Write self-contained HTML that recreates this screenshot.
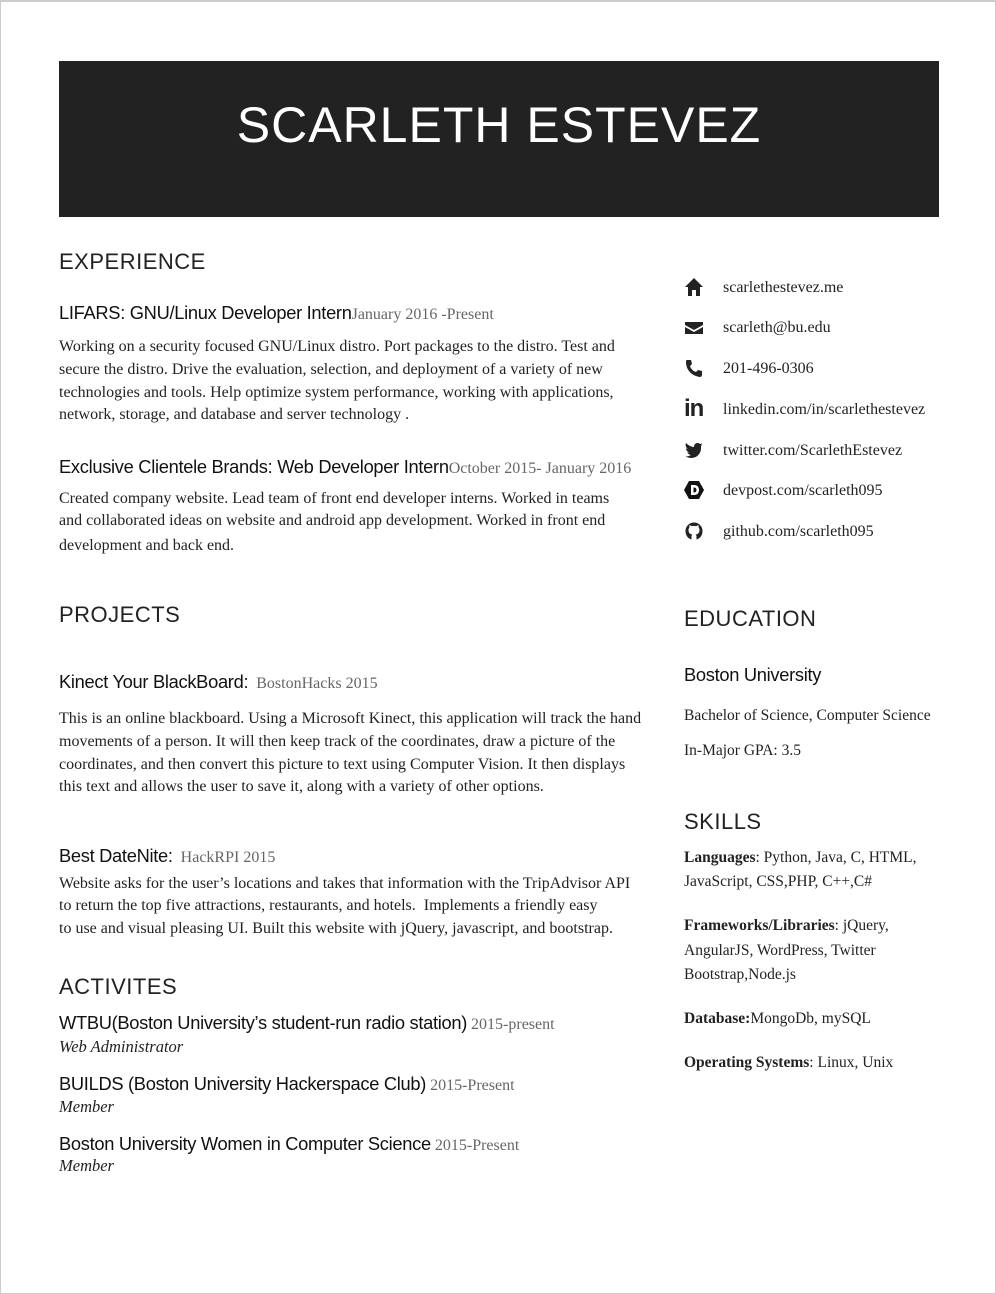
<!DOCTYPE html>
<html><head><meta charset="utf-8"><style>
*{margin:0;padding:0;box-sizing:border-box}
body{width:996px;height:1294px;background:#fff;position:relative;overflow:hidden;font-family:"Liberation Serif",serif;color:#222}
.frame{position:absolute;left:0;top:0;width:996px;height:1294px;border:1px solid #ccc;border-top:2px solid #ccc}
.hdr{position:absolute;left:59px;top:61px;width:880px;height:156px;background:#222;color:#fff;font-family:"Liberation Sans",sans-serif;font-size:50px;text-align:center;line-height:128px;letter-spacing:1px}
.a{position:absolute;white-space:nowrap}
.h{font-family:"Liberation Sans",sans-serif;font-size:22px;color:#222;letter-spacing:.5px}
.t{font-family:"Liberation Sans",sans-serif;font-size:18.3px;color:#111;letter-spacing:-.3px}
.d{font-family:"Liberation Serif",serif;font-size:16px;color:#666}
.p{font-family:"Liberation Serif",serif;font-size:16px;color:#222}
.r{font-size:15.5px}
.i{font-style:italic;font-size:16.5px}
.ic{position:absolute;left:684px;width:20px;height:20px}
</style></head><body>
<div class="frame"></div>
<div class="hdr">SCARLETH ESTEVEZ</div>

<div class="a h" style="left:59px;top:249px">EXPERIENCE</div>
<div class="a" style="left:59px;top:302px"><span class="t">LIFARS: GNU/Linux Developer Intern</span><span class="d">January 2016 -Present</span></div>
<div class="a p" style="left:59px;top:338px">Working on a security focused GNU/Linux distro. Port packages to the distro. Test and</div>
<div class="a p" style="left:59px;top:361px">secure the distro. Drive the evaluation, selection, and deployment of a variety of new</div>
<div class="a p" style="left:59px;top:384px">technologies and tools. Help optimize system performance, working with applications,</div>
<div class="a p" style="left:59px;top:406px">network, storage, and database and server technology .</div>

<div class="a" style="left:59px;top:456px"><span class="t">Exclusive Clientele Brands: Web Developer Intern</span><span class="d">October 2015- January 2016</span></div>
<div class="a p" style="left:59px;top:490px">Created company website. Lead team of front end developer interns. Worked in teams</div>
<div class="a p" style="left:59px;top:512px">and collaborated ideas on website and android app development. Worked in front end</div>
<div class="a p" style="left:59px;top:537px">development and back end.</div>

<div class="a h" style="left:59px;top:602px">PROJECTS</div>
<div class="a" style="left:59px;top:671px"><span class="t">Kinect Your BlackBoard:</span>&nbsp;&nbsp;<span class="d">BostonHacks 2015</span></div>
<div class="a p" style="left:59px;top:710px">This is an online blackboard. Using a Microsoft Kinect, this application will track the hand</div>
<div class="a p" style="left:59px;top:733px">movements of a person. It will then keep track of the coordinates, draw a picture of the</div>
<div class="a p" style="left:59px;top:756px">coordinates, and then convert this picture to text using Computer Vision. It then displays</div>
<div class="a p" style="left:59px;top:778px">this text and allows the user to save it, along with a variety of other options.</div>

<div class="a" style="left:59px;top:845px"><span class="t">Best DateNite:</span>&nbsp;&nbsp;<span class="d">HackRPI 2015</span></div>
<div class="a p" style="left:59px;top:875px">Website asks for the user’s locations and takes that information with the TripAdvisor API</div>
<div class="a p" style="left:59px;top:897px">to return the top five attractions, restaurants, and hotels.&nbsp; Implements a friendly easy</div>
<div class="a p" style="left:59px;top:920px">to use and visual pleasing UI. Built this website with jQuery, javascript, and bootstrap.</div>

<div class="a h" style="left:59px;top:974px">ACTIVITES</div>
<div class="a" style="left:59px;top:1012px"><span class="t">WTBU(Boston University’s student-run radio station)</span> <span class="d">2015-present</span></div>
<div class="a p i" style="left:59px;top:1037px">Web Administrator</div>
<div class="a" style="left:59px;top:1073px"><span class="t">BUILDS (Boston University Hackerspace Club)</span> <span class="d">2015-Present</span></div>
<div class="a p i" style="left:59px;top:1097px">Member</div>
<div class="a" style="left:59px;top:1133px"><span class="t">Boston University Women in Computer Science</span> <span class="d">2015-Present</span></div>
<div class="a p i" style="left:59px;top:1156px">Member</div>

<!-- contact -->
<svg class="ic" style="top:277px" viewBox="0 0 20 20"><path d="M10 1 L1 10 H4 V19 H8 V13 H12 V19 H16 V10 H19 Z" fill="#222"/></svg>
<div class="a p" style="left:723px;top:279px">scarlethestevez.me</div>
<svg class="ic" style="top:318px" viewBox="0 0 20 20"><path d="M1 4 H19 V7 L10 12 L1 7 Z M1 9 L10 14 L19 9 V16 H1 Z" fill="#222"/></svg>
<div class="a p" style="left:723px;top:319px">scarleth@bu.edu</div>
<svg class="ic" style="top:358px" viewBox="0 0 20 20"><path d="M3 2 L7 2 L8 6 L6 8 C7 11 9 13 12 14 L14 12 L18 13 L18 17 C18 18 17 19 16 19 C8 18 2 12 2 4 C2 3 2 2 3 2 Z" fill="#222"/></svg>
<div class="a p" style="left:723px;top:360px">201-496-0306</div>
<div class="a" style="left:684px;top:395px;font-family:'Liberation Sans',sans-serif;font-weight:bold;font-size:24px;color:#222;letter-spacing:-1px">in</div>
<div class="a p" style="left:723px;top:401px">linkedin.com/in/scarlethestevez</div>
<svg class="ic" style="top:440px" viewBox="0 0 20 20"><path d="M19 4 C18 5 17 5 17 5 C18 4 18 3 18 3 C17 4 16 4 16 4 C14 2 10 3 10 7 C7 7 4 5 2 3 C1 5 2 8 4 9 C3 9 2 8 2 8 C2 11 4 12 5 12 C4 13 3 12 3 12 C4 14 6 15 7 15 C5 16 3 17 1 16 C9 21 18 16 17 6 C18 5 19 4 19 4 Z" fill="#222"/></svg>
<div class="a p" style="left:723px;top:442px">twitter.com/ScarlethEstevez</div>
<svg class="ic" style="top:480px" viewBox="0 0 20 20"><path d="M5 1 H15 L20 10 L15 19 H5 L0 10 Z" fill="#111"/><path d="M7 5 H10 C14 5 15 8 15 10 C15 12 14 15 10 15 H7 Z M9.5 7.5 V12.5 H10 C12 12.5 12.5 11 12.5 10 C12.5 9 12 7.5 10 7.5 Z" fill="#fff"/></svg>
<div class="a p" style="left:723px;top:482px">devpost.com/scarleth095</div>
<svg class="ic" style="top:521px" viewBox="0 0 20 20"><path d="M7.5 18.5 C3.5 17.3 1.5 14 1.5 10 A8.5 8.5 0 0 1 18.5 10 C18.5 14 16.5 17.3 12.5 18.5 V15.5 C12.5 14.5 12 14 11.5 13.5 C14 13.2 15.5 12 15.5 9 C15.5 8 15.2 7.2 14.6 6.6 C14.8 6 14.8 5 14.4 4.3 C13.6 4.3 12.8 4.8 12.2 5.2 C10.8 4.8 9.2 4.8 7.8 5.2 C7.2 4.8 6.4 4.3 5.6 4.3 C5.2 5 5.2 6 5.4 6.6 C4.8 7.2 4.5 8 4.5 9 C4.5 12 6 13.2 8.5 13.5 C8 14 7.5 14.5 7.5 15.5 Z" fill="#222"/></svg>
<div class="a p" style="left:723px;top:523px">github.com/scarleth095</div>

<div class="a h" style="left:684px;top:606px">EDUCATION</div>
<div class="a t" style="left:684px;top:664px">Boston University</div>
<div class="a p r" style="left:684px;top:707px">Bachelor of Science, Computer Science</div>
<div class="a p r" style="left:684px;top:742px">In-Major GPA: 3.5</div>

<div class="a h" style="left:684px;top:809px">SKILLS</div>
<div class="a p r" style="left:684px;top:849px"><b>Languages</b>: Python, Java, C, HTML,</div>
<div class="a p r" style="left:684px;top:873px">JavaScript, CSS,PHP, C++,C#</div>
<div class="a p r" style="left:684px;top:917px"><b>Frameworks/Libraries</b>: jQuery,</div>
<div class="a p r" style="left:684px;top:942px">AngularJS, WordPress, Twitter</div>
<div class="a p r" style="left:684px;top:966px">Bootstrap,Node.js</div>
<div class="a p r" style="left:684px;top:1010px"><b>Database:</b>MongoDb, mySQL</div>
<div class="a p r" style="left:684px;top:1054px"><b>Operating Systems</b>: Linux, Unix</div>
</body></html>
